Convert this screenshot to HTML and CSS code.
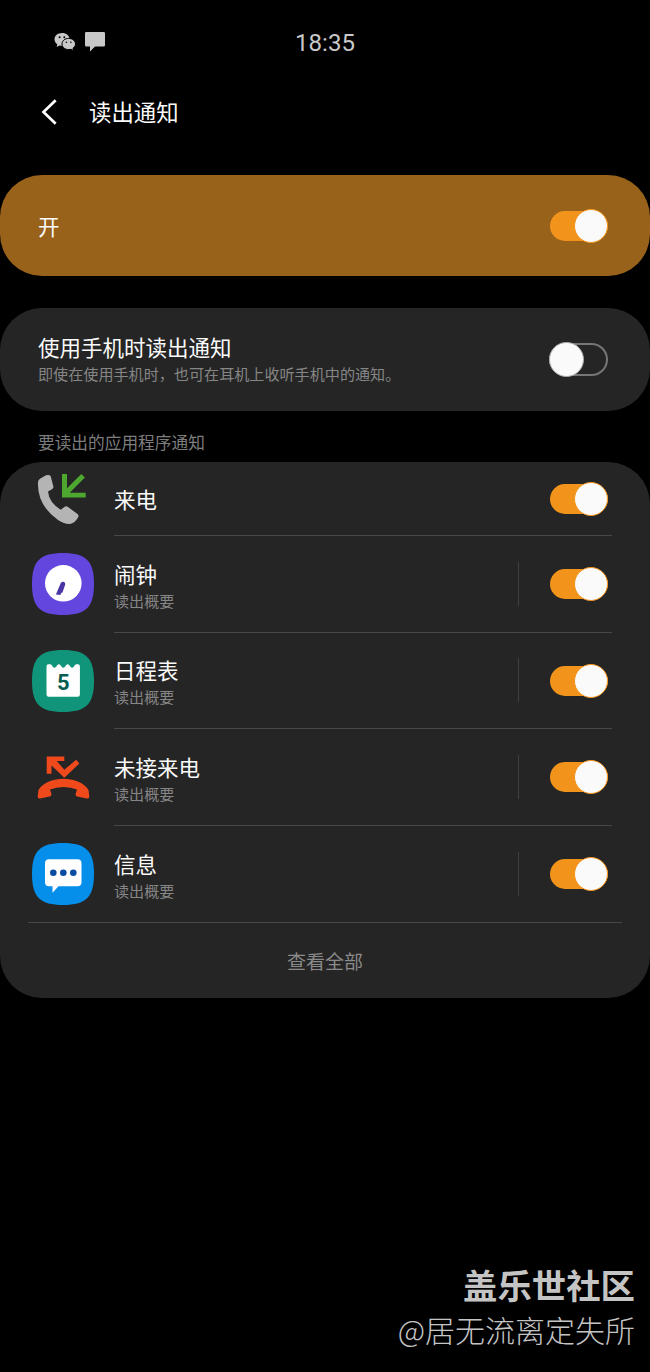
FILE: index.html
```html
<!DOCTYPE html>
<html lang="zh-CN">
<head>
    <meta charset="UTF-8">
    <meta name="viewport" content="width=device-width, initial-scale=1.0">
    <title>读出通知</title>
    <link rel="stylesheet" href="styles.css">
</head>
<body>
    <div class="status-bar">
        <div class="status-icons">
            <svg width="22" height="20" viewBox="0 0 22 20">
                <path fill="#c8c8c8" d="M8 1C3.700 1 .5 3.800.5 7.300c0 2 1 3.700 2.700 4.900L2.700 15l2.800-1.600c.8.2 1.700.3 2.500.3 4.300 0 7.600-2.800 7.600-6.400S12.300 1 8 1z"/>
                <path fill="#c8c8c8" stroke="#000" stroke-width="1" d="M14.700 6.400c-3.900 0-6.700 2.500-6.700 5.600s2.800 5.600 6.700 5.600c.8 0 1.500-.1 2.200-.3l2.600 1.400-.5-2.500c1.500-1 2.500-2.500 2.500-4.200 0-3.100-2.900-5.600-6.800-5.600z"/>
                <g fill="#000">
                    <circle cx="5.600" cy="5.200" r="1"/>
                    <circle cx="10.300" cy="5.200" r="1"/>
                    <circle cx="12.400" cy="10.300" r=".8"/>
                    <circle cx="16.900" cy="10.300" r=".8"/>
                </g>
            </svg>
            <svg width="20" height="20" viewBox="0 0 20 20">
                <path fill="#c8c8c8" d="M1.200 0h17.600q1.200 0 1.200 1.200v12q0 1.200-1.200 1.200H10L5 19.500v-5.100H1.200Q0 14.400 0 13.200v-12Q0 0 1.200 0z"/>
            </svg>
        </div>
        <span class="time">18:35</span>
    </div>

    <header class="title-bar">
        <svg class="back" width="16" height="26" viewBox="0 0 16 26">
            <path d="M14.700 1.200L2.500 13l12.200 11.700" fill="none" stroke="#fff" stroke-width="2.700"/>
        </svg>
        <h1>读出通知</h1>
    </header>

    <section class="card card-main">
        <span class="label">开</span>
        <span class="toggle on"></span>
    </section>

    <section class="card card-option">
        <div class="text">
            <span class="label">使用手机时读出通知</span>
            <span class="desc">即使在使用手机时，也可在耳机上收听手机中的通知。</span>
        </div>
        <span class="toggle"></span>
    </section>

    <h2>要读出的应用程序通知</h2>

    <main class="list">
        <div class="row row-first">
            <svg class="icon" viewBox="0 0 62 62">
                <path fill="#b4b4b4" d="M6 14.500q0-2.500 2-3.700l6-3.500q3.500-1 4.700 1l2.700 10.200q.3 2-1.400 2.800L16 23.500q1 11 12.700 18.200l4-3q1.500-1 3.300.3l9.500 7q1.800 1.500.5 3.500-3 5.500-8.300 6.500-5 .3-11.700-4Q5 37 6 14.500z"/>
                <path fill="#4ea72e" d="M30 6h5v14.200L49.300 5.900l3.600 3.600-15.200 15.200h16v4.800H30z"/>
            </svg>
            <div class="content">
                <div class="text"><span class="label">来电</span></div>
                <span class="toggle on"></span>
            </div>
        </div>
        <div class="row">
            <svg class="icon" viewBox="0 0 62 62">
                <path fill="#6246de" d="M31 0C54 0 62 8 62 31S54 62 31 62 0 54 0 31 8 0 31 0z"/>
                <circle cx="31.300" cy="30.300" r="18.300" fill="#fff"/>
                <path fill="#4c35a5" d="M28.800 30q.8-1.400 2.700-1.200 2.200.5 1.700 2.600L30.500 39.500l-1.300.5-.8 2-4.500-.4z"/>
            </svg>
            <div class="content">
                <div class="text"><span class="label">闹钟</span><span class="desc">读出概要</span></div>
                <span class="separator"></span>
                <span class="toggle on"></span>
            </div>
        </div>
        <div class="row">
            <svg class="icon" viewBox="0 0 62 62">
                <path fill="#10957a" d="M31 0C54 0 62 8 62 31S54 62 31 62 0 54 0 31 8 0 31 0z"/>
                <path fill="#fff" d="M16.500 14.300h1.700c2 0 2 3.400 4.300 3.400s2.300-3.400 4.300-3.400c2.200 0 2.200 3.400 4.500 3.400s2.300-3.400 4.500-3.400c2 0 2 3.400 4.300 3.400s2.300-3.400 4.300-3.400h1.500q2 0 2 2.200v27.900q0 2.300-2.300 2.300H16.800q-2.300 0-2.300-2.300V16.500q0-2.200 2-2.200z"/>
                <text class="day" x="31.200" y="39.700" text-anchor="middle">5</text>
            </svg>
            <div class="content">
                <div class="text"><span class="label">日程表</span><span class="desc">读出概要</span></div>
                <span class="separator"></span>
                <span class="toggle on"></span>
            </div>
        </div>
        <div class="row">
            <svg class="icon" viewBox="0 0 62 62">
                <path fill="#f04a1c" d="M14.700 10.500h17.600v4.600h-7.500l7.500 8.700 11.800-10 3.300 3.600L32.300 31.800 19.500 19.500v8.200h-4.800z"/>
                <path fill="#f04a1c" d="M5.700 50.500l.8-6.500C11 36 22 32.700 31.500 32.700S52 36 56.500 44l.8 6.500q0 2.300-2.400 1.900l-9.700-1.900q-1.700-.4-1.700-2.200l1.500-4.800q-6-2.500-13.500-2.500T18 43.500l1.500 4.800q0 1.800-1.700 2.200l-9.700 1.900q-2.400.4-2.400-1.900z"/>
            </svg>
            <div class="content">
                <div class="text"><span class="label">未接来电</span><span class="desc">读出概要</span></div>
                <span class="separator"></span>
                <span class="toggle on"></span>
            </div>
        </div>
        <div class="row row-last">
            <svg class="icon" viewBox="0 0 62 62">
                <path fill="#058eea" d="M31 0C54 0 62 8 62 31S54 62 31 62 0 54 0 31 8 0 31 0z"/>
                <path fill="#fff" d="M17 16.300h28.500q4 0 4 4V39.200q0 4-4 4H26.500l-6 6.500v-6.500H17q-4 0-4-4V20.300q0-4 4-4z"/>
                <g fill="#0b4da2">
                    <circle cx="21.300" cy="29.800" r="3.300"/>
                    <circle cx="31.300" cy="29.800" r="3.300"/>
                    <circle cx="41.300" cy="29.800" r="3.300"/>
                </g>
            </svg>
            <div class="content">
                <div class="text"><span class="label">信息</span><span class="desc">读出概要</span></div>
                <span class="separator"></span>
                <span class="toggle on"></span>
            </div>
        </div>
        <div class="view-all">查看全部</div>
    </main>

    <footer>
        <strong>盖乐世社区</strong>
        <span>@居无流离定失所</span>
    </footer>
</body>
</html>
```

FILE: styles.css
```css
*, *::before {
    box-sizing: border-box;
}
body {
    margin: 0;
    height: 1372px;
    display: flex;
    flex-direction: column;
    background: #000;
    color: #fafafa;
    font-family: Roboto, "Noto Sans CJK SC", sans-serif;
}
h1, h2 {
    margin: 0;
    font-weight: normal;
}
.status-bar {
    height: 84px;
    padding: 0 54px;
    display: grid;
    grid-template-columns: 1fr auto 1fr;
    align-items: center;
}
.status-icons {
    display: flex;
    gap: 9px;
}
.time {
    padding-top: 1px;
    font-size: 24px;
    color: #c8c8c8;
}
.title-bar {
    height: 56px;
    padding-left: 41px;
    display: flex;
    align-items: center;
    gap: 32px;
}
.title-bar h1 {
    padding-top: 2px;
    font-size: 22.4px;
    line-height: 32px;
}
.card {
    display: flex;
    align-items: center;
    justify-content: space-between;
    padding: 0 42px 0 38px;
    border-radius: 42px;
}
.card-main {
    height: 101px;
    margin-top: 35px;
    background: #98621a;
}
.card-main .label {
    padding-top: 4px;
}
.card-option {
    height: 103px;
    margin-top: 32px;
    background: #252525;
}
.text {
    flex: 1;
    padding-top: 3px;
    display: flex;
    flex-direction: column;
}
.label {
    font-size: 21.5px;
    line-height: 28px;
}
.desc {
    font-size: 15.1px;
    line-height: 24px;
    color: #868686;
}
h2 {
    height: 51px;
    padding: 8px 38px 0;
    font-size: 16.7px;
    line-height: 50px;
    color: #7d7d7d;
}
.list {
    height: 536px;
    background: #252525;
    border-radius: 42px;
}
.row {
    height: 96.6px;
    padding: 0 38px 0 32px;
    display: flex;
    align-items: center;
    gap: 20px;
}
.row-first {
    height: 74px;
}
.icon {
    width: 62px;
    height: 62px;
}
.content {
    flex: 1;
    height: 100%;
    padding-right: 4px;
    display: flex;
    align-items: center;
    border-bottom: 1px solid #484848;
}
.content .text {
    padding-top: 8px;
}
.row-first .text {
    padding-top: 5px;
}
.row .toggle {
    margin-top: 1px;
}
.row-last .content {
    border-bottom-color: transparent;
}
.separator {
    width: 1px;
    height: 44px;
    margin-right: 31px;
    background: #404040;
}
.day {
    font: bold 22px Roboto, sans-serif;
    fill: #075e50;
}
.toggle {
    width: 59px;
    height: 33px;
    display: flex;
    align-items: center;
    border: 2px solid #767676;
    border-radius: 17px;
}
.toggle::before {
    content: "";
    flex: none;
    width: 35px;
    height: 35px;
    margin-left: -2px;
    border: 1px solid #aaa;
    border-radius: 50%;
    background: #fafafa;
}
.toggle.on {
    width: 58px;
    height: 30px;
    border: none;
    justify-content: flex-end;
    background: #f2941c;
}
.toggle.on::before {
    width: 34px;
    height: 34px;
    border-color: #f2941c;
}
.view-all {
    height: 75px;
    margin: 0 28px;
    padding-top: 3px;
    border-top: 1px solid #484848;
    font-size: 19px;
    line-height: 74px;
    text-align: center;
    color: #8a8a8a;
}
footer {
    margin-top: auto;
    padding: 0 15px 21px 0;
    display: flex;
    flex-direction: column;
    align-items: flex-end;
    color: #c4c4c4;
    font-family: "Noto Sans CJK SC", sans-serif;
}
footer strong {
    font-size: 34.4px;
    line-height: 48px;
}
footer span {
    font-size: 30px;
    font-weight: 300;
    line-height: 43px;
}
```
